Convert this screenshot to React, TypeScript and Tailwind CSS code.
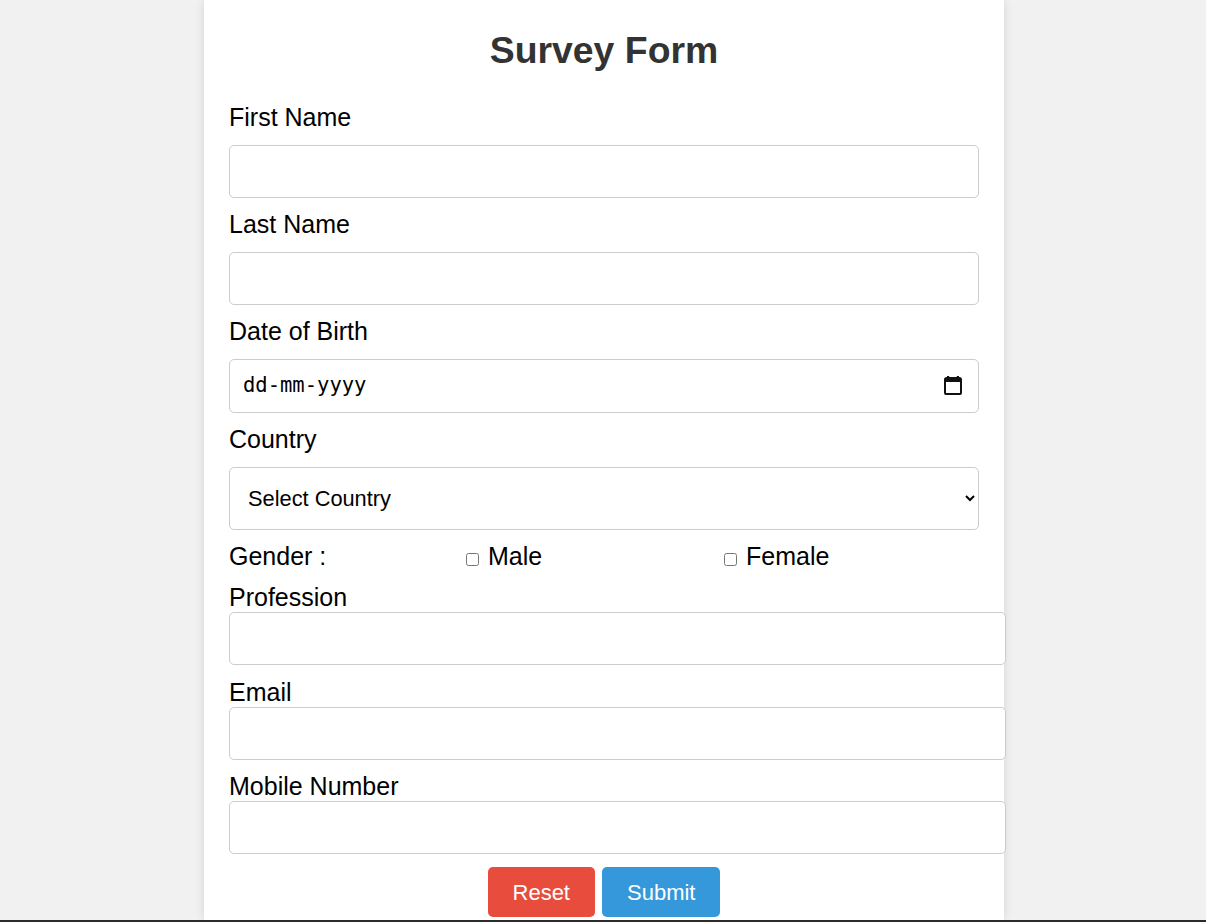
const font = { fontFamily: '"Liberation Sans", Arial, sans-serif' };

function Label({ children, tight }: { children: React.ReactNode; tight?: boolean }) {
  return (
    <label className={`block text-[25px] leading-[29px] text-black ${tight ? "mt-[12.5px]" : "my-[12.5px]"}`}>
      {children}
    </label>
  );
}

function TextInput({ wide }: { wide?: boolean }) {
  return (
    <input
      type="text"
      className={`block h-[53px] rounded-[5px] border border-[#cccccc] bg-white px-[12px] text-[20px] outline-none ${
        wide ? "w-[777px]" : "w-full"
      }`}
    />
  );
}

function CalendarIcon() {
  return (
    <svg width="18" height="19" viewBox="0 0 18 19" fill="none">
      <rect x="3" y="0" width="2.2" height="3" fill="#111" />
      <rect x="12.8" y="0" width="2.2" height="3" fill="#111" />
      <rect x="1" y="2" width="16" height="16" rx="1.6" stroke="#111" strokeWidth="2" />
      <rect x="1" y="2" width="16" height="4" fill="#111" />
    </svg>
  );
}

export default function App() {
  return (
    <div className="flex h-[922px] flex-col overflow-hidden bg-[#f1f1f1]" style={font}>
      <div className="min-h-0 flex-1 overflow-hidden pl-[2px]">
        <div className="mx-auto min-h-full w-[800px] bg-white px-[25px] pt-[29px] shadow-[0_0_10px_rgba(0,0,0,0.12)]">
          <h1 className="text-center text-[37.4px] font-bold leading-[42px] text-[#333333]">Survey Form</h1>

          <form className="pt-[19.5px]">
            <Label>First Name</Label>
            <TextInput />

            <Label>Last Name</Label>
            <TextInput />

            <Label>Date of Birth</Label>
            <div className="flex h-[54px] w-full items-center rounded-[5px] border border-[#cccccc] bg-white pl-[13px] pr-[16px]">
              <input
                type="text"
                placeholder="dd-mm-yyyy"
                className="min-w-0 flex-1 bg-transparent text-[20.5px] text-black outline-none placeholder:text-black"
                style={{ fontFamily: '"DejaVu Sans Mono", "Liberation Mono", monospace' }}
              />
              <CalendarIcon />
            </div>

            <Label>Country</Label>
            <select className="block h-[63px] w-full rounded-[5px] border border-[#cccccc] bg-white pl-[14px] pr-[12px] text-[21.8px] text-black outline-none">
              <option>Select Country</option>
              <option>India</option>
              <option>United States</option>
              <option>United Kingdom</option>
            </select>

            <div className="mt-[12px] flex h-[29px] items-center text-[25px] leading-[29px] text-black">
              <span className="w-[237px]">Gender :</span>
              <label className="flex w-[258px] items-center">
                <input type="checkbox" className="m-0 mt-[7px] h-[13px] w-[13px]" />
                <span className="ml-[9px]">Male</span>
              </label>
              <label className="flex items-center">
                <input type="checkbox" className="m-0 mt-[7px] h-[13px] w-[13px]" />
                <span className="ml-[9px]">Female</span>
              </label>
            </div>

            <Label tight>Profession</Label>
            <TextInput wide />

            <Label tight>Email</Label>
            <TextInput wide />

            <Label tight>Mobile Number</Label>
            <TextInput wide />

            <div className="mt-[13px] flex justify-center gap-[7px]">
              <button
                type="reset"
                className="h-[50px] rounded-[5px] bg-[#e74c3c] px-[25px] text-[22px] text-white"
              >
                Reset
              </button>
              <button
                type="submit"
                className="h-[50px] rounded-[5px] bg-[#3498db] px-[25px] text-[22px] text-white"
              >
                Submit
              </button>
            </div>
          </form>
        </div>
      </div>
      <div className="h-[2px] bg-[#2b2b2b]" />
    </div>
  );
}
